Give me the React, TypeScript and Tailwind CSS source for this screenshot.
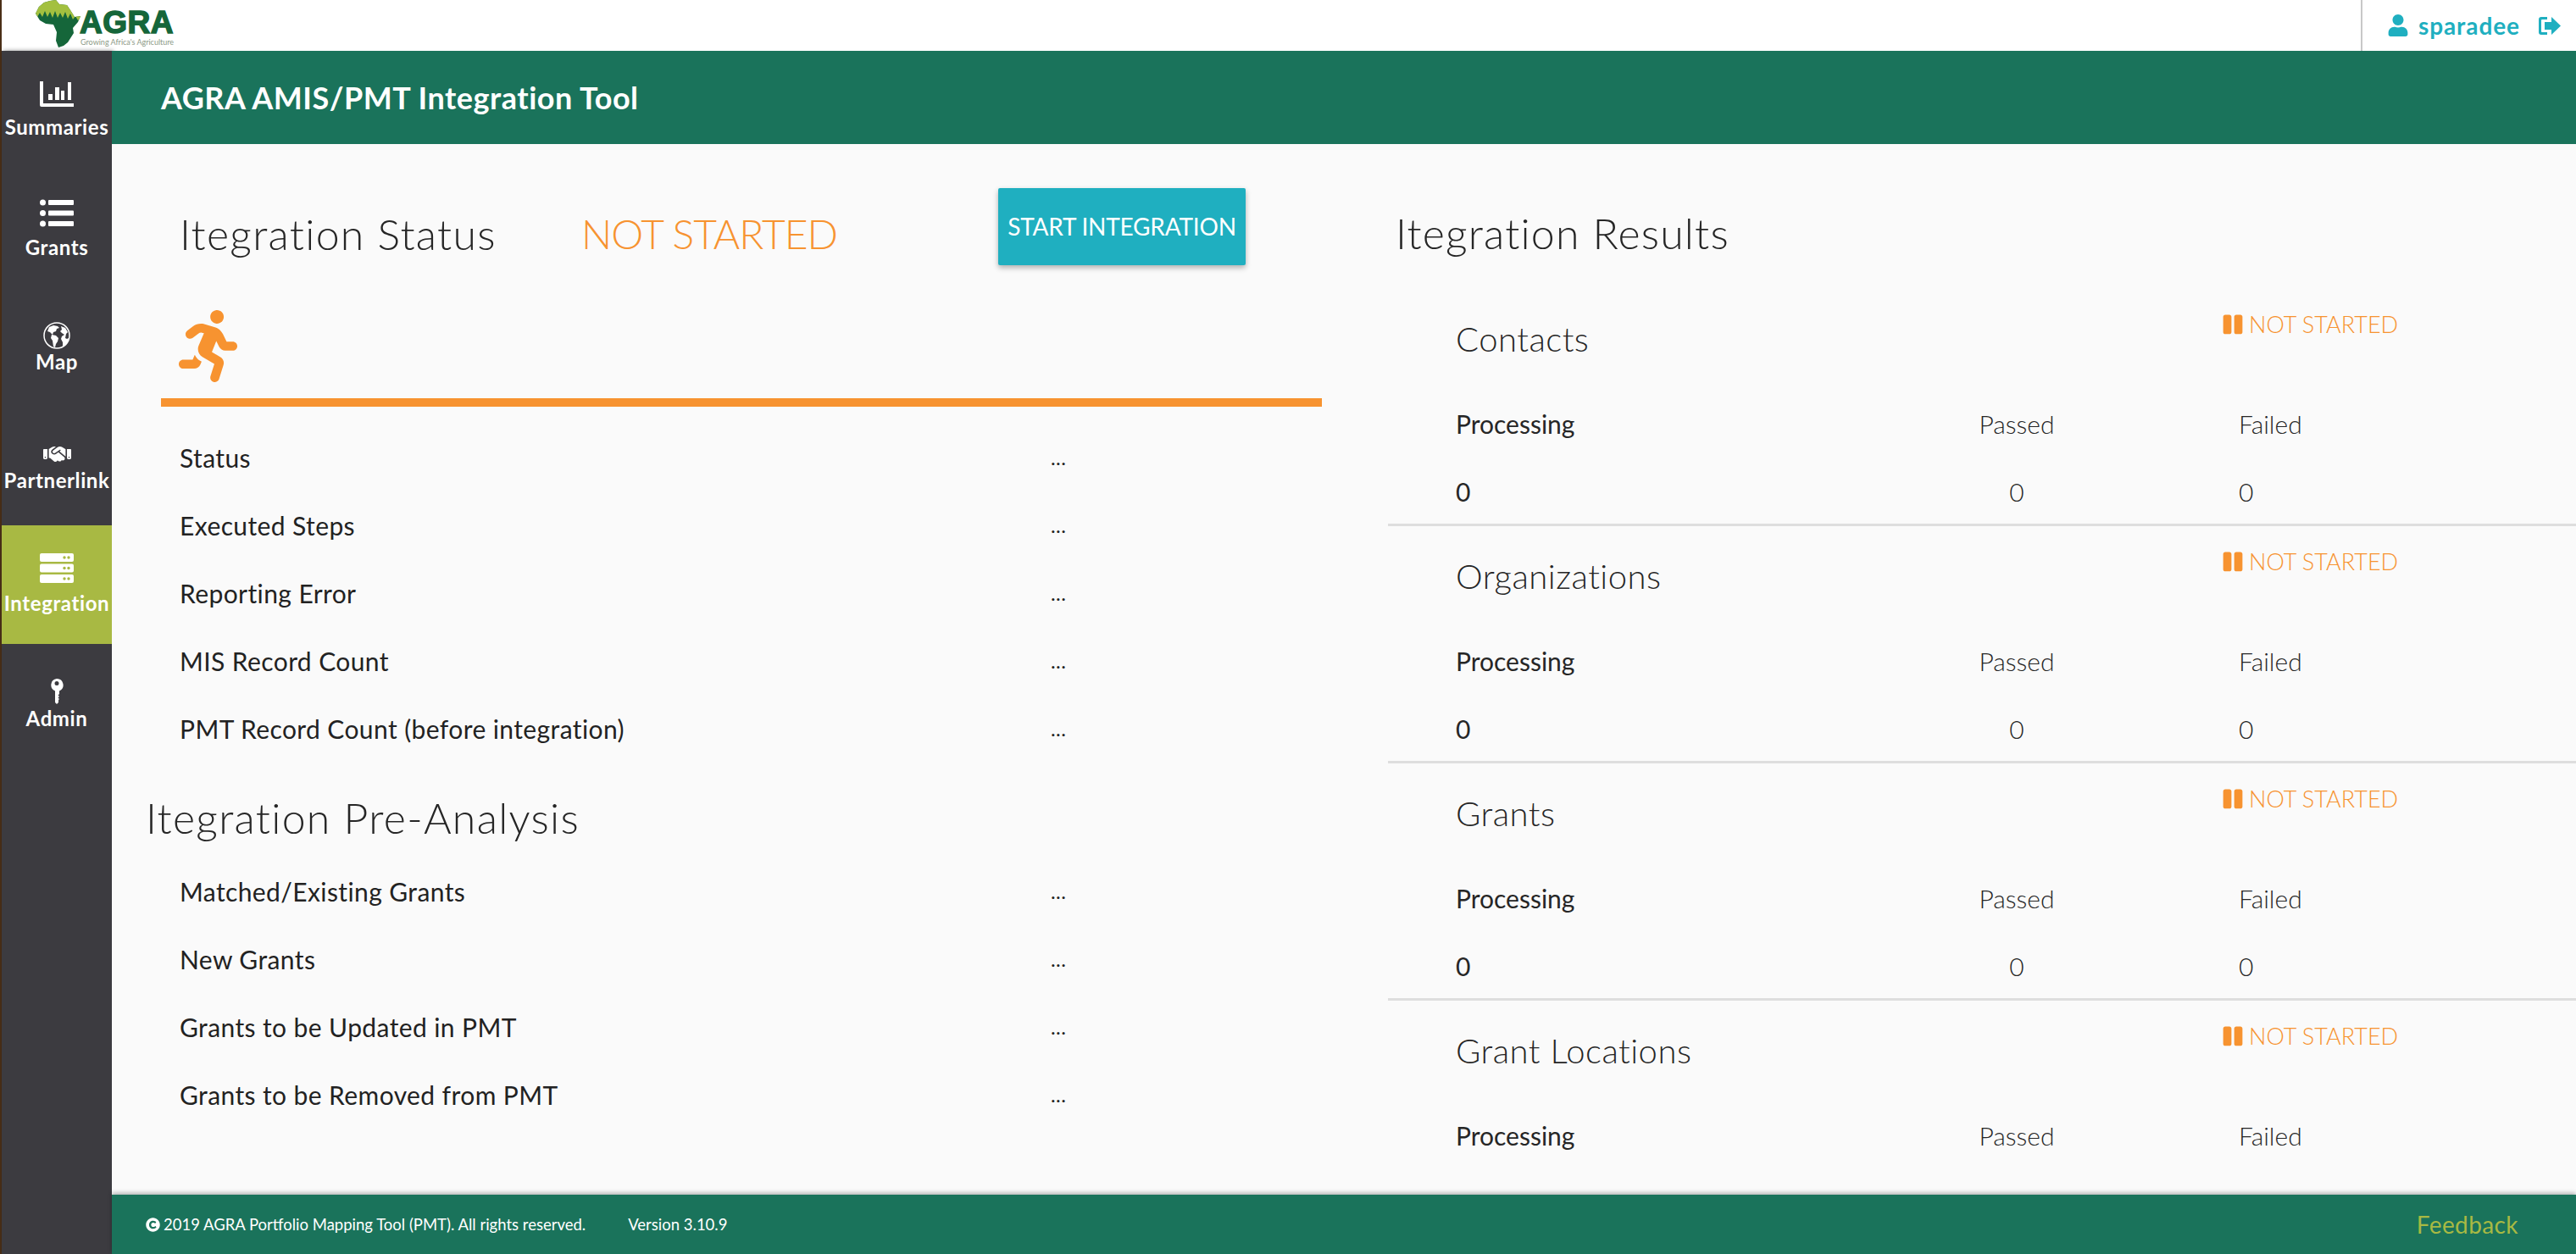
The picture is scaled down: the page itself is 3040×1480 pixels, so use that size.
import type { ReactNode } from 'react'
import { FaRunning, FaUser, FaPause, FaCopyright } from 'react-icons/fa'
import { FaHandshake } from 'react-icons/fa6'

const NAV_PADS: Record<string, string> = {
  Summaries: 'pt-[36px]',
  Grants: 'pt-[35px]',
  Map: 'pt-[40px]',
  Partnerlink: 'pt-[44px]',
  Integration: 'pt-[33px]',
  Admin: 'pt-[41px]',
}

const NAV_GAPS: Record<string, string> = {
  Summaries: 'mt-[9px]',
  Grants: 'mt-[9px]',
  Map: 'mt-0',
  Partnerlink: 'mt-[4px]',
  Integration: 'mt-[9px]',
  Admin: 'mt-[2px]',
}

function StatsIcon() {
  return (
    <svg width="40" height="30" viewBox="0 0 40 30" fill="white">
      <path d="M0 0h4v26h36v4H2a2 2 0 0 1-2-2z" />
      <rect x="10" y="15" width="5" height="7" />
      <rect x="18" y="7" width="5" height="15" />
      <rect x="25" y="11" width="4" height="11" />
      <rect x="33" y="1" width="4" height="21" />
    </svg>
  )
}

function ListIcon() {
  return (
    <svg width="40" height="33" viewBox="0 0 40 33" fill="white">
      {[4, 16.500, 29].map((y) => (
        <g key={y}>
          <circle cx="3.500" cy={y} r="3.500" />
          <rect x="10" y={y - 3} width="30" height="6" rx="1" />
        </g>
      ))}
    </svg>
  )
}

function GlobeIcon() {
  return (
    <svg width="32" height="32" viewBox="0 0 32 32" fill="white">
      <circle cx="16" cy="16" r="15" fill="none" stroke="white" strokeWidth="1.500" />
      <path d="M7 6l5-2 5 1 2 2-3 1-1 3-3 1-1 3-3-3-3-1z" />
      <path d="M10 15l5 1 3 3-1 4-2 3-1 4-2-1-1-7-2-3z" />
      <path d="M21 5l5 2 3 5-2 2-1 5 2 1 2-1-1 5-4 4-2 1 0-5-2-4 1-3 3-2-3-2-2-2 2-2z" />
    </svg>
  )
}

function ServerIcon() {
  return (
    <svg width="40" height="35" viewBox="0 0 40 35" fill="white">
      <rect y="0" width="40" height="10" rx="2" />
      <rect y="12.5" width="40" height="10" rx="2" />
      <rect y="25" width="40" height="10" rx="2" />
      {[5, 17.5, 30].map((y) => (
        <g key={y} fill="#a8b943">
          <circle cx="29" cy={y} r="1.7" />
          <circle cx="34" cy={y} r="1.7" />
        </g>
      ))}
    </svg>
  )
}

function KeyIcon() {
  return (
    <svg width="16" height="30" viewBox="0 0 16 30" fill="white">
      <path fillRule="evenodd" d="M8 0a7.5 7.5 0 0 1 3 14.4V18l-1.500 1.500L11 21l-1.500 1.500L11 24l-1 1v3l-2 2-2-2V14.400A7.500 7.500 0 0 1 8 0zm0 3a2.500 2.500 0 1 0 0 5 2.500 2.500 0 0 0 0-5z" />
    </svg>
  )
}

function LogoutIcon() {
  return (
    <svg width="26" height="21" viewBox="0 0 26 21" fill="#1fafc0">
      <path d="M3 0h7v3H4a1 1 0 0 0-1 1v13a1 1 0 0 0 1 1h6v3H3a3 3 0 0 1-3-3V3a3 3 0 0 1 3-3z" />
      <path d="M15 0l11 10.500L15 21v-6H7V6h8z" />
    </svg>
  )
}

function AgraLogo() {
  const africa = 'M17 1 L24 0 L28 5 L37 6 L41 12 L46 20 L53 19 L50 26 L44 33 L45 39 L38 50 L33 54 L27 56 L24 48 L25 38 L21 29 L12 28 L5 24 L0 16 L4 8 L10 3 Z'
  return (
    <div className="relative h-[60px] w-[170px]">
      <svg className="absolute left-0 top-0" width="54" height="56" viewBox="0 0 54 56">
        <defs>
          <clipPath id="africa-top">
            <polygon points="0,0 54,0 54,21 50,24 47,19 44,23 41,16 38,22 35,14 32,21 29,15 26,21 23,13 20,21 17,14 14,20 11,13 8,20 5,15 2,20 0,16" />
          </clipPath>
        </defs>
        <path d={africa} fill="#15663a" />
        <path d={africa} fill="#a3c03f" clipPath="url(#africa-top)" />
      </svg>
      <div className="absolute left-[52px] top-[9px] font-['Liberation_Sans',sans-serif] text-[37px] font-bold leading-[36px] tracking-[0.5px] text-[#15663a] [-webkit-text-stroke:1.5px_#15663a]">AGRA</div>
      <div className="absolute left-[53px] top-[43px] whitespace-nowrap font-['Lato',sans-serif] text-[9px] leading-[14px] text-[#8d9a86]">Growing Africa's Agriculture</div>
    </div>
  )
}

function NavItem({ icon, label, active }: { icon: ReactNode; label: string; active?: boolean }) {
  return (
    <div className={`flex h-[140px] flex-col items-center ${NAV_PADS[label]} ${active ? 'bg-[#a8b943]' : ''}`}>
      <div className="flex justify-center">{icon}</div>
      <div className={`${NAV_GAPS[label]} text-[24px] font-bold leading-[30px] tracking-[0.6px] text-white`}>{label}</div>
    </div>
  )
}

function InfoRow({ label }: { label: string }) {
  return (
    <div className="flex h-[80px] items-center pl-[80px] text-[30px] tracking-[0.4px] text-[#222222]">
      <div className="w-[1028px]">{label}</div>
      <div className="text-[24px]">...</div>
    </div>
  )
}

function ResultBlock({ title }: { title: string }) {
  return (
    <div className="h-[280px] border-b-[3px] border-[#dedede] pl-[80px]">
      <div className="flex">
        <div className="w-[904px] pt-[36px] text-[40px] font-light leading-[46px] tracking-[0.5px] text-[#262626]">{title}</div>
        <div className="flex items-center gap-[6px] self-start pt-[28px] text-[27px] font-light leading-[28px] text-[#f79330]">
          <FaPause size={26} />
          <span>NOT STARTED</span>
        </div>
      </div>
      <div className="mt-[59px] grid grid-cols-[542px_240px_1fr] gap-y-[44px] text-[30px] font-light leading-[36px] text-[#262626]">
        <div className="font-normal">Processing</div>
        <div className="text-center">Passed</div>
        <div className="pl-[142px]">Failed</div>
        <div className="font-normal">0</div>
        <div className="text-center">0</div>
        <div className="pl-[142px]">0</div>
      </div>
    </div>
  )
}

export default function App() {
  return (
    <div className="flex h-[1480px] w-[3040px] overflow-hidden bg-white font-['Lato',sans-serif]">
      <div className="w-[2px] bg-[#4a2f17]" />
      <div className="flex min-w-0 flex-1 flex-col">
        <header className="flex h-[60px] items-start justify-between bg-white pl-[40px]">
          <AgraLogo />
          <div className="flex h-[60px] w-[254px] items-center border-l-2 border-[#c8c8c8] pl-[29px] text-[#1fafc0]">
            <FaUser size={26} />
            <span className="ml-[11px] w-[142px] text-[28px] font-bold leading-[30px] tracking-[0.9px]">sparadee</span>
            <LogoutIcon />
          </div>
        </header>
        <div className="flex min-h-0 flex-1">
          <nav className="w-[130px] shrink-0 bg-[#3c3b40] shadow-[2px_0_5px_rgba(0,0,0,0.45)]">
            <NavItem icon={<StatsIcon />} label="Summaries" />
            <NavItem icon={<ListIcon />} label="Grants" />
            <NavItem icon={<GlobeIcon />} label="Map" />
            <NavItem icon={<FaHandshake color="white" className="h-[24px] w-[33px]" preserveAspectRatio="none" />} label="Partnerlink" />
            <NavItem icon={<ServerIcon />} label="Integration" active />
            <NavItem icon={<KeyIcon />} label="Admin" />
          </nav>
          <div className="flex min-w-0 flex-1 flex-col">
            <div className="flex h-[110px] shrink-0 items-center bg-[#1a735b] pl-[58px] text-[36px] font-bold leading-[44px] tracking-[0.5px] text-white">AGRA AMIS/PMT Integration Tool</div>
            <main className="flex min-h-0 flex-1 overflow-hidden bg-[#fafafa]">
              <section className="w-[1506px] shrink-0">
                <div className="flex pt-[52px]">
                  <div className="w-[554px] pl-[80px] pt-[24px] text-[50px] font-light leading-[60px] tracking-[1.3px] text-[#262626]">Itegration Status</div>
                  <div className="w-[492px] pt-[24px] text-[48px] font-light leading-[60px] tracking-[-1px] text-[#f79330]">NOT STARTED</div>
                  <button className="flex h-[91px] w-[292px] items-center justify-center whitespace-nowrap rounded-[2px] bg-[#1fafc0] pb-[2px] text-[28px] leading-[36px] tracking-[-0.2px] text-white shadow-[0_3px_6px_rgba(0,0,0,0.3)]">START INTEGRATION</button>
                </div>
                <div className="mt-[53px] pl-[71px]">
                  <FaRunning size={85} color="#f79330" className="block" />
                </div>
                <div className="ml-[58px] mt-[19px] h-[10px] w-[1370px] bg-[#f79330]" />
                <div className="mt-[20px]">
                  {['Status', 'Executed Steps', 'Reporting Error', 'MIS Record Count', 'PMT Record Count (before integration)'].map((r) => (
                    <InfoRow key={r} label={r} />
                  ))}
                </div>
                <div className="mt-[35px] pl-[40px] text-[50px] font-light leading-[60px] tracking-[1.3px] text-[#262626]">Itegration Pre-Analysis</div>
                <div className="mt-[17px]">
                  {['Matched/Existing Grants', 'New Grants', 'Grants to be Updated in PMT', 'Grants to be Removed from PMT'].map((r) => (
                    <InfoRow key={r} label={r} />
                  ))}
                </div>
              </section>
              <section className="min-w-0 flex-1">
                <div className="pl-[9px] pt-[75px] text-[50px] font-light leading-[60px] tracking-[1.2px] text-[#262626]">Itegration Results</div>
                <div className="mt-[36px]">
                  {['Contacts', 'Organizations', 'Grants', 'Grant Locations'].map((t) => (
                    <ResultBlock key={t} title={t} />
                  ))}
                </div>
              </section>
            </main>
            <footer className="flex h-[70px] shrink-0 items-center justify-between bg-[#1a735b] pl-[40px] pr-[68px] shadow-[0_-2px_5px_rgba(0,0,0,0.3)]">
              <div className="flex items-center text-[18.500px] leading-[24px] text-white">
                <FaCopyright size={17} />
                <span className="ml-[4px]">2019 AGRA Portfolio Mapping Tool (PMT). All rights reserved.</span>
                <span className="ml-[50px]">Version 3.10.9</span>
              </div>
              <div className="text-[28px] leading-[32px] tracking-[0.4px] text-[#a8b943]">Feedback</div>
            </footer>
          </div>
        </div>
      </div>
    </div>
  )
}
